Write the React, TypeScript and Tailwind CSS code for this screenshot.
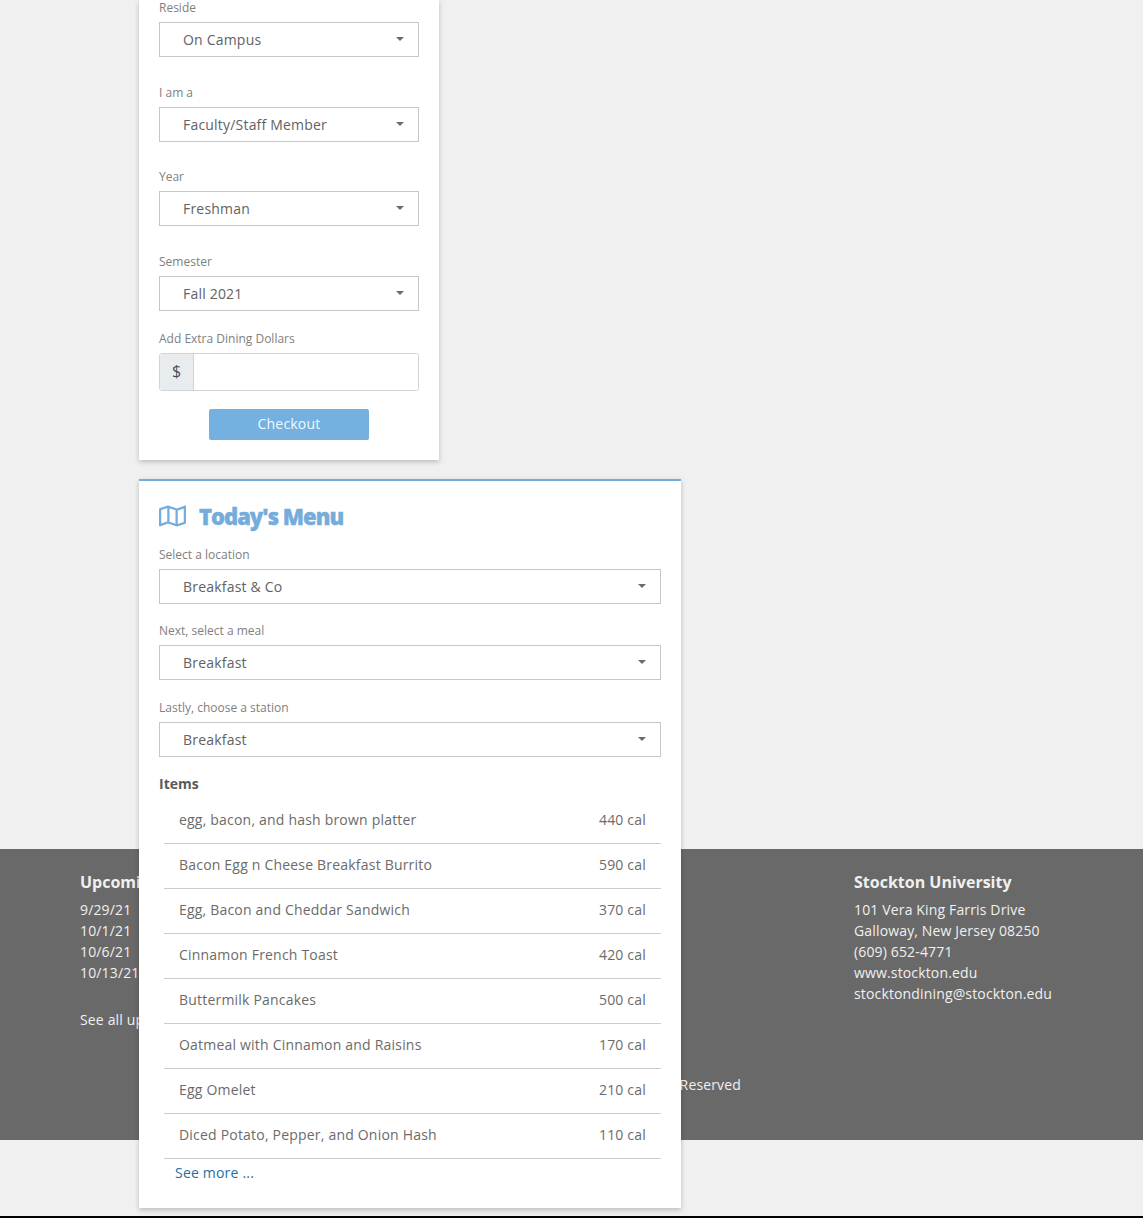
import { FaRegMap } from "react-icons/fa";

const items = [
  ["egg, bacon, and hash brown platter", "440 cal"],
  ["Bacon Egg n Cheese Breakfast Burrito", "590 cal"],
  ["Egg, Bacon and Cheddar Sandwich", "370 cal"],
  ["Cinnamon French Toast", "420 cal"],
  ["Buttermilk Pancakes", "500 cal"],
  ["Oatmeal with Cinnamon and Raisins", "170 cal"],
  ["Egg Omelet", "210 cal"],
  ["Diced Potato, Pepper, and Onion Hash", "110 cal"],
];

function Field({ label, value, className }: { label: string; value: string; className: string }) {
  return (
    <div className={className}>
      <div className="h-[15px] text-[12px] leading-[15px] text-[#808080]">{label}</div>
      <div className="mt-[7px] flex h-[35px] items-center justify-between border border-[#c6c6c6] bg-white pb-[1px] pl-[23px] pr-[14px] text-[14px] tracking-[0.2px] text-[#626262]">
        <span>{value}</span>
        <span className="h-0 w-0 border-x-[4px] border-t-[4px] border-x-transparent border-t-[#6a6a6a]"></span>
      </div>
    </div>
  );
}

export default function App() {
  return (
    <div className="relative flex h-[1218px] flex-col overflow-hidden bg-[#f0f0f0] font-['Open_Sans',sans-serif]">
      {/* footer sits under the cards */}
      <footer className="absolute inset-x-0 top-[849px] h-[291px] bg-[#696969] text-[14px] leading-[21px] tracking-[0.15px] text-[#f0f0f0]">
        <div className="flex justify-between pl-[80px] pr-[91px] pt-[21px]">
          <div>
            <h4 className="text-[16px] font-bold leading-[24px] tracking-normal">Upcoming Events</h4>
            <div className="mt-[5px]">9/29/21</div>
            <div>10/1/21</div>
            <div>10/6/21</div>
            <div>10/13/21</div>
            <div className="mt-[26px]">See all upcoming events</div>
          </div>
          <div>
            <h4 className="text-[16px] font-bold leading-[24px] tracking-normal">Stockton University</h4>
            <div className="mt-[5px]">101 Vera King Farris Drive</div>
            <div>Galloway, New Jersey 08250</div>
            <div>(609) 652-4771</div>
            <div>www.stockton.edu</div>
            <div>stocktondining@stockton.edu</div>
          </div>
        </div>
        <div className="mt-[44px] pr-[402px] text-right">© 2021 Stockton University. All Rights Reserved</div>
      </footer>

      <main className="relative ml-[139px] h-[1216px]">
        <section className="w-[300px] bg-white px-[20px] pb-[20px] shadow-[0_2px_5px_rgba(0,0,0,0.22)]">
          <Field label="Reside" value="On Campus" className="" />
          <Field label="I am a" value="Faculty/Staff Member" className="mt-[28px]" />
          <Field label="Year" value="Freshman" className="mt-[27px]" />
          <Field label="Semester" value="Fall 2021" className="mt-[28px]" />
          <div className="mt-[20px] h-[15px] text-[12px] leading-[15px] text-[#808080]">Add Extra Dining Dollars</div>
          <div className="mt-[7px] flex h-[38px] overflow-hidden rounded-[3px] border border-[#ced4da]">
            <div className="flex w-[34px] items-center justify-center border-r border-[#ced4da] bg-[#e9ecef] pb-[2px] text-[16px] text-[#495057]">$</div>
            <div className="flex-1 bg-white"></div>
          </div>
          <div className="mt-[18px] flex justify-center">
            <button className="h-[31px] w-[160px] rounded-[2px] bg-[#74b0e0] pb-[2px] text-[14px] tracking-[0.2px] text-[#f3f8fc]">Checkout</button>
          </div>
        </section>

        <section className="mt-[19px] h-[729px] w-[542px] border-t-[2px] border-[#74acdb] bg-white px-[20px] shadow-[0_2px_5px_rgba(0,0,0,0.22)]">
          <div className="mt-[17px] flex h-[36px] items-center">
            <FaRegMap className="h-[24px] w-[27px] text-[#74acdb]" />
            <h2 className="ml-[13px] text-[22px] font-extrabold tracking-[-1px] text-[#74acdb] [-webkit-text-stroke:0.4px_#74acdb]">Today's Menu</h2>
          </div>
          <Field label="Select a location" value="Breakfast & Co" className="mt-[13px]" />
          <Field label="Next, select a meal" value="Breakfast" className="mt-[19px]" />
          <Field label="Lastly, choose a station" value="Breakfast" className="mt-[20px]" />
          <div className="mt-[16px] text-[14px] font-bold leading-[21px] text-[#5a5a5a]">Items</div>
          <ul className="ml-[5px] mt-[5px]">
            {items.map(([name, cal]) => (
              <li key={name} className="flex h-[45px] items-center justify-between border-b border-[#cccccc] px-[15px] pb-[3px] text-[14px] tracking-[0.2px] text-[#6b6b6b]">
                <span>{name}</span>
                <span>{cal}</span>
              </li>
            ))}
          </ul>
          <a className="ml-[16px] mt-[3px] block text-[14px] leading-[21px] tracking-[0.2px] text-[#1f6f9f]">See more ...</a>
        </section>
      </main>
      <div className="relative h-[2px] bg-black"></div>
    </div>
  );
}
